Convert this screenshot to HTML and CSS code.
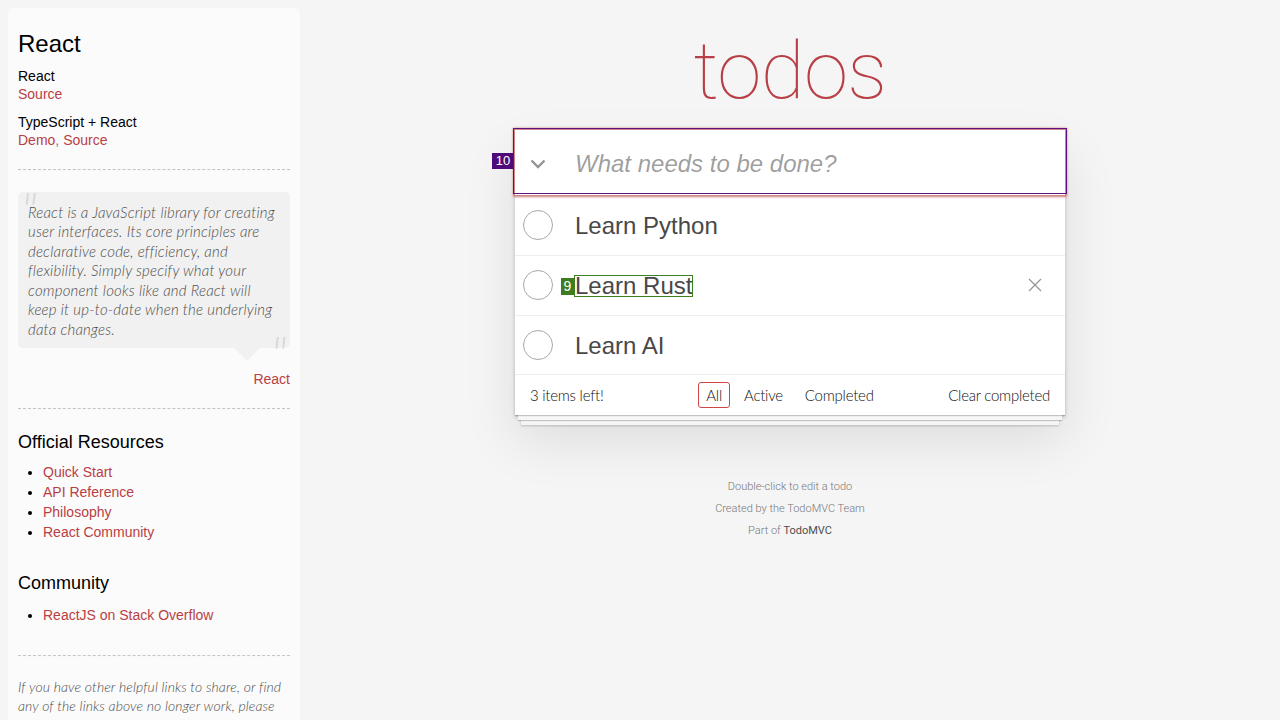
FILE: index.html
```html
<!DOCTYPE html>
<html lang="en">
<head>
<meta charset="utf-8">
<title>React • TodoMVC</title>
<link rel="stylesheet" href="styles.css">
</head>
<body>
<div class="page">
  <aside class="learn">
    <header>
      <h3 class="learn-title">React</h3>
      <div class="source-links">
        <h5 class="learn-sub learn-sub-first">React</h5>
        <a class="link" href="#">Source</a>
        <h5 class="learn-sub">TypeScript + React</h5>
        <a class="link" href="#">Demo</a>, <a class="link" href="#">Source</a>
      </div>
    </header>
    <hr class="rule rule-first">
    <blockquote class="quote">
      <p class="quote-text">React is a JavaScript library for creating user interfaces. Its core principles are declarative code, efficiency, and flexibility. Simply specify what your component looks like and React will keep it up-to-date when the underlying data changes.</p>
      <footer class="quote-source"><a class="link" href="#">React</a></footer>
    </blockquote>
    <hr class="rule">
    <h4 class="learn-section">Official Resources</h4>
    <ul class="learn-list">
      <li><a class="link" href="#">Quick Start</a></li>
      <li><a class="link" href="#">API Reference</a></li>
      <li><a class="link" href="#">Philosophy</a></li>
      <li><a class="link" href="#">React Community</a></li>
    </ul>
    <h4 class="learn-section learn-section-tight">Community</h4>
    <ul class="learn-list">
      <li><a class="link" href="#">ReactJS on Stack Overflow</a></li>
    </ul>
    <hr class="rule">
    <p class="learn-note">If you have other helpful links to share, or find any of the links above no longer work, please <a class="link" href="#">let us know</a>.</p>
  </aside>

  <main class="main">
    <h1 class="title">todos</h1>
    <section class="todoapp">
      <header class="new-row">
        <span class="annot-badge annot-purple">10</span>
        <label class="toggle-all" aria-label="Mark all as complete">
          <svg width="16" height="10" viewBox="0 0 16 10"><polyline points="1.5,1.5 8,8 14.5,1.5" fill="none" stroke="#949494" stroke-width="2.4" stroke-linecap="butt" stroke-linejoin="miter"/></svg>
        </label>
        <input class="new-todo" placeholder="What needs to be done?">
      </header>
      <ul class="todo-list">
        <li class="todo">
          <span class="toggle"><svg width="30" height="30" viewBox="0 0 30 30"><circle cx="15" cy="15" r="14.5" fill="none" stroke="#a8a8a8" stroke-width="1"/></svg></span>
          <label class="todo-label">Learn Python</label>
        </li>
        <li class="todo">
          <span class="toggle"><svg width="30" height="30" viewBox="0 0 30 30"><circle cx="15" cy="15" r="14.5" fill="none" stroke="#a8a8a8" stroke-width="1"/></svg></span>
          <label class="todo-label"><span class="annot-text">Learn Rust</span></label>
          <span class="destroy"><svg width="14" height="14" viewBox="0 0 14 14"><path d="M1 1L13 13M13 1L1 13" stroke="#949494" stroke-width="1.2"/></svg></span>
        </li>
        <li class="todo">
          <span class="toggle"><svg width="30" height="30" viewBox="0 0 30 30"><circle cx="15" cy="15" r="14.5" fill="none" stroke="#a8a8a8" stroke-width="1"/></svg></span>
          <label class="todo-label">Learn AI</label>
        </li>
      </ul>
      <footer class="footer">
        <span class="todo-count">3 items left!</span>
        <ul class="filters"><li class="filter-item"><a class="filter selected" href="#">All</a></li><li class="filter-item"><a class="filter" href="#">Active</a></li><li class="filter-item"><a class="filter" href="#">Completed</a></li></ul>
        <span class="clear-completed">Clear completed</span>
      </footer>
    </section>
    <footer class="info">
      <p class="info-line">Double-click to edit a todo</p>
      <p class="info-line">Created by the TodoMVC Team</p>
      <p class="info-line">Part of <a class="info-link" href="#">TodoMVC</a></p>
    </footer>
  </main>
</div>
</body>
</html>
```

FILE: styles.css
```css
html, body {
  margin: 0;
  padding: 0;
}

body {
  background: #f5f5f5;
  color: #111;
  font: 300 14px/1.4 Roboto, "Liberation Sans", Arial, sans-serif;
}

.page {
  display: flex;
  align-items: flex-start;
  height: 100vh;
  overflow: hidden;
}

/* ---------- sidebar ---------- */
.learn {
  flex: 0 0 272px;
  margin: 8px 0 0 8px;
  padding: 10px;
  min-height: 760px;
  border-radius: 5px;
  background: rgba(255, 255, 255, 0.6);
  font-family: "Liberation Sans", Arial, sans-serif;
  font-weight: 400;
  color: #000;
}

.link {
  color: #b83f45;
  text-decoration: none;
  font-weight: 400;
}

.learn-title {
  margin: 12px 0 7px;
  font-size: 24px;
  font-weight: 400;
  line-height: 1.2;
}

.learn-sub {
  margin: 10px 0 0;
  font-size: 14px;
  font-weight: 400;
  line-height: 1.2;
  color: #000;
}

.learn-sub-first {
  margin-top: 9px;
}

.source-links {
  color: #777;
}

.rule {
  margin: 20px 0;
  border: 0;
  border-top: 1px dashed #c5c5c5;
  border-bottom: 1px dashed #f7f7f7;
}

.rule-first {
  margin-top: 18px;
  margin-bottom: 21px;
}

.quote {
  position: relative;
  margin: 20px 0 60px;
  padding: 10px;
  border-radius: 5px;
  background: rgba(0, 0, 0, 0.04);
}

.quote::after {
  content: '';
  position: absolute;
  top: 100%;
  right: 30px;
  border: 13px solid transparent;
  border-top-color: rgba(0, 0, 0, 0.04);
}

.quote-text {
  margin: 0 0 -1px;
  padding-top: 1px;
  font-family: Lato, Roboto, "Liberation Sans", sans-serif;
  font-size: 15px;
  font-weight: 300;
  font-style: italic;
  letter-spacing: 0.2px;
  line-height: 1.3;
  color: #4d4d4d;
}

.quote-text::before,
.quote-text::after {
  content: '"';
  position: absolute;
  font-size: 50px;
  font-style: italic;
  opacity: 0.15;
  line-height: 1;
}

.quote-text::before {
  top: -8px;
  left: 3px;
}

.quote-text::after {
  bottom: -30px;
  right: 3px;
}

.quote-source {
  position: absolute;
  right: 0;
  bottom: -42px;
  font-size: 14px;
  line-height: 1.4;
}

.learn-section {
  margin: 10px 0 8px;
  padding-top: 2px;
  font-size: 18px;
  font-weight: 400;
  line-height: 1.2;
}

.learn-section-tight {
  margin-top: -1px;
  margin-bottom: 11px;
}

.learn-list {
  margin: 0 0 30px 25px;
  padding: 0;
}

.learn-list li {
  line-height: 20px;
}

.learn-note {
  margin: 0;
  font-family: Lato, Roboto, "Liberation Sans", sans-serif;
  font-size: 14px;
  font-weight: 300;
  font-style: italic;
  letter-spacing: 0.1px;
  line-height: 19px;
  color: #4d4d4d;
}

/* ---------- main ---------- */
.main {
  flex: 1;
  display: flex;
  flex-direction: column;
  align-items: center;
}

.title {
  margin: 0;
  height: 130px;
  padding-top: 31px;
  box-sizing: border-box;
  font: 100 80px/1 Roboto, "Liberation Sans", sans-serif;
  letter-spacing: -0.6px;
  color: #b83f45;
  text-align: center;
}

.todoapp {
  width: 550px;
  background: #fff;
  margin: 0;
  box-shadow: 0 2px 4px 0 rgba(0, 0, 0, 0.2), 0 25px 50px 0 rgba(0, 0, 0, 0.1);
}

.new-row {
  position: relative;
  display: flex;
  align-items: center;
  height: 65px;
  box-shadow: 0 0 2px 2px #cf7d7d;
}

.new-row::after {
  content: '';
  position: absolute;
  top: -2px;
  left: -2px;
  right: -2px;
  bottom: 1px;
  border: 1px solid #5b1486;
  pointer-events: none;
}

.annot-badge {
  position: absolute;
  color: #fff;
  font: 400 13px/16px "Liberation Sans", Arial, sans-serif;
  text-align: center;
}

.annot-purple {
  left: -23px;
  top: 23px;
  width: 22px;
  height: 16px;
  background: #4f0a79;
}

.toggle-all {
  flex: 0 0 45px;
  height: 65px;
  padding-top: 2px;
  box-sizing: border-box;
  display: flex;
  align-items: center;
  justify-content: center;
}

.new-todo {
  flex: 1;
  height: 65px;
  box-sizing: border-box;
  margin: 0;
  padding: 17px 16px 15px 15px;
  border: 0;
  outline: 0;
  background: #fff;
  font: 400 24px/1.4 "Liberation Sans", Arial, sans-serif;
  color: #111;
}

.new-todo::placeholder {
  font-style: italic;
  color: rgba(0, 0, 0, 0.4);
}

.todo-list {
  margin: 0;
  padding: 0;
  list-style: none;
  border-top: 1px solid #e6e6e6;
}

.todo {
  display: flex;
  align-items: center;
  border-bottom: 1px solid #ededed;
}

.toggle {
  display: flex;
  margin-left: 8px;
}

.todo-label {
  flex: 1;
  padding: 16px 15px 14px 22px;
  font: 400 24px/1.2 "Liberation Sans", Arial, sans-serif;
  color: #484848;
}

.annot-text {
  position: relative;
}

.annot-text::after {
  content: '';
  position: absolute;
  top: 3px;
  bottom: 2px;
  left: -1px;
  right: -1px;
  border: 1px solid #3f7f22;
}

.annot-text::before {
  content: '9';
  position: absolute;
  left: -14px;
  top: 6px;
  width: 13px;
  height: 17px;
  background: #3d7d1f;
  color: #fff;
  font: 400 14px/17px "Liberation Sans", Arial, sans-serif;
  text-align: center;
}

.destroy {
  width: 40px;
  height: 40px;
  margin-right: 10px;
  display: flex;
  align-items: center;
  justify-content: center;
}

.footer {
  position: relative;
  display: grid;
  grid-template-columns: 1fr auto 1fr;
  align-items: start;
  height: 20px;
  padding: 11px 15px 9px;
  font-family: Lato, Roboto, "Liberation Sans", sans-serif;
  font-size: 15px;
  font-weight: 300;
  letter-spacing: -0.25px;
  line-height: 19.6px;
  color: #111;
}

.footer::before {
  content: '';
  position: absolute;
  right: 0;
  bottom: 0;
  left: 0;
  height: 50px;
  overflow: hidden;
  box-shadow: 0 1px 1px rgba(0, 0, 0, 0.2),
              0 8px 0 -3px #f6f6f6,
              0 9px 1px -3px rgba(0, 0, 0, 0.2),
              0 16px 0 -6px #f6f6f6,
              0 17px 2px -6px rgba(0, 0, 0, 0.2);
  pointer-events: none;
}

.todo-count {
  justify-self: start;
}

.filters {
  display: flex;
  margin: 0;
  padding: 0;
  list-style: none;
}

.filter {
  margin: 3px;
  padding: 3px 7px;
  border: 1px solid transparent;
  border-radius: 3px;
  color: inherit;
  text-decoration: none;
}

.filter.selected {
  border-color: #ce4646;
}

.clear-completed {
  justify-self: end;
}

.info {
  margin-top: 66px;
  color: #777;
  font-size: 11px;
  text-align: center;
}

.info-line {
  margin: 11px 0;
  line-height: 1;
}

.info-line:first-child {
  margin-top: 0;
}

.info-link {
  color: #4d4d4d;
  font-weight: 400;
  text-decoration: none;
}
```
